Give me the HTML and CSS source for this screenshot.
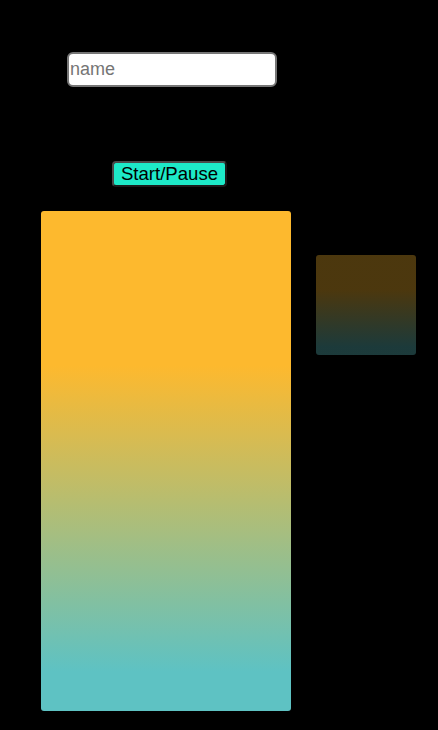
FILE: index.html
```html
<!DOCTYPE html>
<html>
<head>
<meta charset="utf-8">
<link rel="stylesheet" href="styles.css">
</head>
<body>
<div class="page">
  <input class="name-input" type="text" placeholder="name">
  <button class="start-btn">Start/Pause</button>
  <div class="stage">
    <div class="big-box"></div>
    <div class="small-box"></div>
  </div>
</div>
</body>
</html>
```
FILE: styles.css
```css
html, body {
  margin: 0;
  padding: 0;
  background: #000;
  font-family: "Liberation Sans", Arial, sans-serif;
}
.page {
  display: flex;
  flex-direction: column;
  align-items: flex-start;
  padding-top: 52px;
}
.name-input {
  box-sizing: border-box;
  width: 210px;
  height: 35px;
  margin-left: 67px;
  border: 2px solid #767676;
  border-radius: 6px;
  background: #fff;
  padding: 0 1px;
  font-family: "Liberation Sans", Arial, sans-serif;
  font-size: 18px;
  outline: none;
}
.name-input::placeholder {
  color: #757575;
}
.start-btn {
  box-sizing: border-box;
  margin-left: 112px;
  margin-top: 74px;
  width: 115px;
  height: 26px;
  background: #1de9c8;
  border: 2px solid #4a4a4a;
  border-right-color: #1a1a1a;
  border-bottom-color: #1a1a1a;
  border-radius: 4px;
  padding: 0;
  font-family: "Liberation Sans", Arial, sans-serif;
  font-size: 18.6px;
  color: #000;
}
.stage {
  display: flex;
  align-items: flex-start;
  gap: 25px;
  margin-left: 41px;
  margin-top: 24px;
}
.big-box {
  width: 250px;
  height: 500px;
  border-radius: 3px;
  background: linear-gradient(to bottom, #fdb92e 0%, #fdb92e 31%, #5ec2c3 92%, #5ec2c3 100%);
}
.small-box {
  width: 100px;
  height: 100px;
  margin-top: 44px;
  border-radius: 3px;
  background: linear-gradient(to bottom, #fdb92e 0%, #fdb92e 35%, #5ec2c3 92%, #5ec2c3 100%);
  opacity: 0.3;
}
```
